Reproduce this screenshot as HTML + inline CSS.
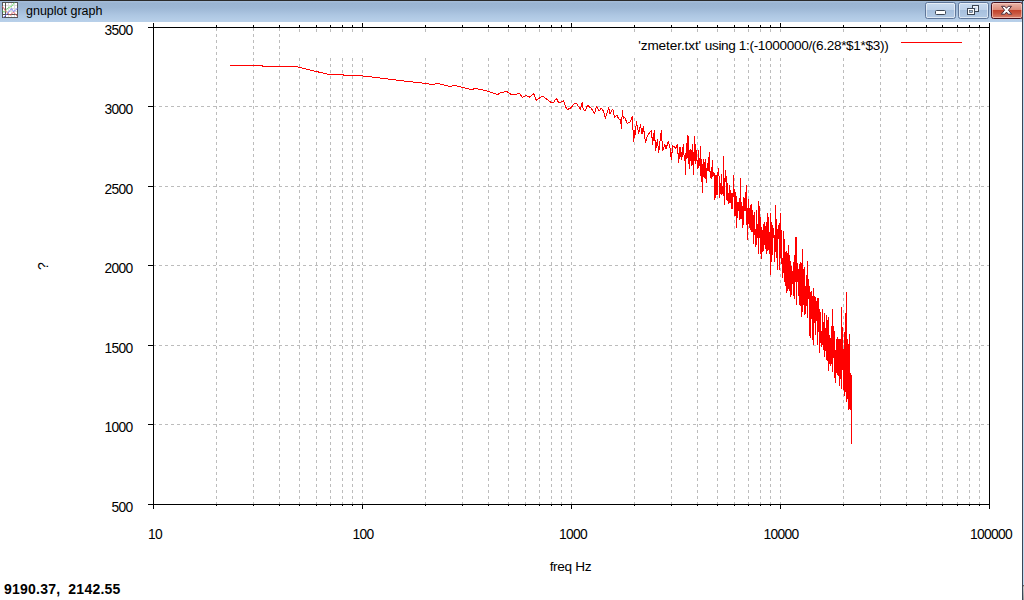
<!DOCTYPE html>
<html><head><meta charset="utf-8"><title>gnuplot graph</title>
<style>
html,body{margin:0;padding:0;background:#fff;}
body{width:1024px;height:600px;overflow:hidden;position:relative;font-family:"Liberation Sans",sans-serif;color:#000;}
#tb{position:absolute;left:0;top:0;width:1024px;height:22px;background:linear-gradient(#a3bbd8 0px,#a3bbd8 2px,#99b3d1 3px,#9db7d5 8px,#adc6e2 15px,#b9d1ea 22px);}
#tbtop{position:absolute;left:0;top:0;width:1024px;height:1px;background:#2a2a2a;}
#title{position:absolute;left:26px;top:4px;font-size:12.5px;line-height:15px;white-space:nowrap;letter-spacing:0px;}
#rb1{position:absolute;left:1022px;top:1px;width:1px;height:599px;background:#3a4656;}
#rb2{position:absolute;left:1023px;top:1px;width:1px;height:584px;background:#c3d8ef;}
#rb3{position:absolute;left:1023px;top:585px;width:1px;height:15px;background:linear-gradient(#444,#ccc 2px,#999);}
svg{position:absolute;left:0;top:0;}
.yl{position:absolute;left:60px;width:72.6px;text-align:right;font-size:13.8px;line-height:14px;letter-spacing:-0.67px;white-space:nowrap;}
.xl{position:absolute;top:528px;width:80px;text-align:center;font-size:13.8px;line-height:14px;letter-spacing:-0.67px;white-space:nowrap;}
#key{position:absolute;left:638.2px;top:39px;font-size:13.6px;line-height:14px;white-space:nowrap;}#key .a{letter-spacing:-0.1px}#key .b{letter-spacing:-0.38px}#key .c{letter-spacing:-0.335px}
#xlab{position:absolute;left:530.5px;width:80px;top:560px;text-align:center;font-size:13.6px;line-height:14px;letter-spacing:-0.3px;white-space:nowrap;}
#ylab{position:absolute;left:22.5px;top:258.5px;width:40px;height:14px;text-align:center;font-size:14px;line-height:14px;transform:rotate(-90deg);}
#status{position:absolute;left:4px;top:581px;font-size:14px;line-height:16px;font-weight:bold;letter-spacing:0.22px;word-spacing:4px;white-space:nowrap;}
.btn{position:absolute;top:2px;height:15px;width:29px;border:1px solid #60779a;border-radius:2.5px;box-shadow:inset 0 0 0 1px rgba(255,255,255,.55);background:linear-gradient(#c8daef 0,#bdd1e9 46%,#a6bfdd 47%,#b3cae5 100%);}
#bx{width:29.5px;border-color:#470f1c;background:linear-gradient(#eab5a9 0,#dc8b79 46%,#c2412a 47%,#c9563f 70%,#d9826e 100%);box-shadow:inset 0 0 0 1px rgba(255,215,205,.6);}
</style></head><body>
<div id="tb"></div><div id="tbtop"></div>
<svg id="ico" width="16" height="16" viewBox="0 0 16 16" style="left:2px;top:2px">
<rect x="0" y="0" width="16" height="16" fill="#fff"/>
<g stroke="#dcdcdc" stroke-width="1" shape-rendering="crispEdges"><line x1="6.5" y1="0" x2="6.5" y2="16"/><line x1="9.5" y1="0" x2="9.5" y2="16"/><line x1="12.5" y1="0" x2="12.5" y2="16"/><line x1="0" y1="3.5" x2="16" y2="3.5"/><line x1="0" y1="6.5" x2="16" y2="6.5"/><line x1="0" y1="9.5" x2="16" y2="9.5"/></g>
<g stroke="#555" stroke-width="1" fill="none" shape-rendering="crispEdges"><rect x="0.5" y="0.5" width="15" height="15"/><line x1="3.5" y1="0" x2="3.5" y2="16"/><line x1="0" y1="12.5" x2="16" y2="12.5"/></g>
<polyline points="0.4,8.6 2,10.4 4,8.4 6.4,5.6 9.6,4.4 12.4,0.4" fill="none" stroke="#5fdc5f" stroke-width="1" opacity="0.85"/>
<polyline points="0.4,4.2 2,6.6 3.2,8.8 5.6,10.8 8,13.4 11.2,10.4 13.2,11.6 15.2,14.4" fill="none" stroke="#f06060" stroke-width="1" opacity="0.85"/>
<polyline points="1.2,15.4 3.2,14 9.6,6.6 11.6,9.6 15.6,6.4" fill="none" stroke="#6a6af0" stroke-width="1" opacity="0.85"/>
</svg>
<div id="title">gnuplot graph</div>
<div class="btn" style="left:925px"></div><div class="btn" style="left:958px"></div><div class="btn" id="bx" style="left:991px"></div>
<svg width="100" height="22" viewBox="920 0 100 22" style="left:920px;top:0">
<rect x="935.5" y="10.5" width="10" height="4" rx="1" fill="#fff" stroke="#3c4654" stroke-width="1"/>
<rect x="972.5" y="5.5" width="6" height="6" fill="#eef3fa" stroke="#3c4654" stroke-width="1"/>
<rect x="974.5" y="7.5" width="2" height="2" fill="#b7cbe6" stroke="none"/>
<rect x="967.5" y="8.5" width="7" height="6" fill="#fff" stroke="#3c4654" stroke-width="1"/>
<rect x="969.5" y="10.5" width="3" height="2" fill="#9fb9da" stroke="#3c4654" stroke-width="0.6"/>
<path d="M1001.5 6.3 L1004.9 6.3 L1006.5 8.3 L1008.1 6.3 L1011.5 6.3 L1008.4 10.2 L1011.7 14.2 L1008.2 14.2 L1006.5 12.1 L1004.8 14.2 L1001.3 14.2 L1004.6 10.2 Z" fill="#fff" stroke="#4a2c38" stroke-width="1" stroke-linejoin="round"/>
</svg>
<div id="rb1"></div><div id="rb2"></div><div id="rb3"></div>
<svg width="1024" height="600" viewBox="0 0 1024 600" shape-rendering="crispEdges">
<g stroke="#bcbcbc" stroke-width="1" stroke-dasharray="3 3" fill="none"><line x1="216.5" y1="28" x2="216.5" y2="504"/><line x1="253.5" y1="28" x2="253.5" y2="504"/><line x1="279.5" y1="28" x2="279.5" y2="504"/><line x1="299.5" y1="29" x2="299.5" y2="32"/><line x1="299.5" y1="58" x2="299.5" y2="504"/><line x1="316.5" y1="29" x2="316.5" y2="32"/><line x1="316.5" y1="58" x2="316.5" y2="504"/><line x1="330.5" y1="29" x2="330.5" y2="32"/><line x1="330.5" y1="58" x2="330.5" y2="504"/><line x1="342.5" y1="29" x2="342.5" y2="32"/><line x1="342.5" y1="58" x2="342.5" y2="504"/><line x1="352.5" y1="29" x2="352.5" y2="32"/><line x1="352.5" y1="58" x2="352.5" y2="504"/><line x1="425.5" y1="29" x2="425.5" y2="32"/><line x1="425.5" y1="58" x2="425.5" y2="504"/><line x1="462.5" y1="29" x2="462.5" y2="32"/><line x1="462.5" y1="58" x2="462.5" y2="504"/><line x1="488.5" y1="29" x2="488.5" y2="32"/><line x1="488.5" y1="58" x2="488.5" y2="504"/><line x1="508.5" y1="29" x2="508.5" y2="32"/><line x1="508.5" y1="58" x2="508.5" y2="504"/><line x1="525.5" y1="29" x2="525.5" y2="32"/><line x1="525.5" y1="58" x2="525.5" y2="504"/><line x1="539.5" y1="29" x2="539.5" y2="32"/><line x1="539.5" y1="58" x2="539.5" y2="504"/><line x1="551.5" y1="29" x2="551.5" y2="32"/><line x1="551.5" y1="58" x2="551.5" y2="504"/><line x1="561.5" y1="29" x2="561.5" y2="32"/><line x1="561.5" y1="58" x2="561.5" y2="504"/><line x1="634.5" y1="29" x2="634.5" y2="32"/><line x1="634.5" y1="58" x2="634.5" y2="504"/><line x1="671.5" y1="29" x2="671.5" y2="32"/><line x1="671.5" y1="58" x2="671.5" y2="504"/><line x1="697.5" y1="29" x2="697.5" y2="32"/><line x1="697.5" y1="58" x2="697.5" y2="504"/><line x1="717.5" y1="29" x2="717.5" y2="32"/><line x1="717.5" y1="58" x2="717.5" y2="504"/><line x1="734.5" y1="29" x2="734.5" y2="32"/><line x1="734.5" y1="58" x2="734.5" y2="504"/><line x1="748.5" y1="29" x2="748.5" y2="32"/><line x1="748.5" y1="58" x2="748.5" y2="504"/><line x1="760.5" y1="29" x2="760.5" y2="32"/><line x1="760.5" y1="58" x2="760.5" y2="504"/><line x1="770.5" y1="29" x2="770.5" y2="32"/><line x1="770.5" y1="58" x2="770.5" y2="504"/><line x1="843.5" y1="29" x2="843.5" y2="32"/><line x1="843.5" y1="58" x2="843.5" y2="504"/><line x1="880.5" y1="29" x2="880.5" y2="32"/><line x1="880.5" y1="58" x2="880.5" y2="504"/><line x1="906.5" y1="29" x2="906.5" y2="32"/><line x1="906.5" y1="58" x2="906.5" y2="504"/><line x1="926.5" y1="29" x2="926.5" y2="32"/><line x1="926.5" y1="58" x2="926.5" y2="504"/><line x1="942.5" y1="29" x2="942.5" y2="32"/><line x1="942.5" y1="58" x2="942.5" y2="504"/><line x1="957.5" y1="29" x2="957.5" y2="32"/><line x1="957.5" y1="58" x2="957.5" y2="504"/><line x1="969.5" y1="29" x2="969.5" y2="32"/><line x1="969.5" y1="58" x2="969.5" y2="504"/><line x1="979.5" y1="28" x2="979.5" y2="504"/><line x1="362.5" y1="29" x2="362.5" y2="32"/><line x1="362.5" y1="58" x2="362.5" y2="504"/><line x1="571.5" y1="29" x2="571.5" y2="32"/><line x1="571.5" y1="58" x2="571.5" y2="504"/><line x1="780.5" y1="29" x2="780.5" y2="32"/><line x1="780.5" y1="58" x2="780.5" y2="504"/><line x1="153" y1="106.5" x2="989" y2="106.5"/><line x1="153" y1="186.5" x2="989" y2="186.5"/><line x1="153" y1="265.5" x2="989" y2="265.5"/><line x1="153" y1="345.5" x2="989" y2="345.5"/><line x1="153" y1="424.5" x2="989" y2="424.5"/></g>
<g stroke="#000" stroke-width="1" fill="none"><rect x="153.5" y="27.5" width="836" height="477" fill="none"/><line x1="153.5" y1="23" x2="153.5" y2="27"/><line x1="153.5" y1="505" x2="153.5" y2="509"/><line x1="362.5" y1="23" x2="362.5" y2="27"/><line x1="362.5" y1="505" x2="362.5" y2="509"/><line x1="571.5" y1="23" x2="571.5" y2="27"/><line x1="571.5" y1="505" x2="571.5" y2="509"/><line x1="780.5" y1="23" x2="780.5" y2="27"/><line x1="780.5" y1="505" x2="780.5" y2="509"/><line x1="989.5" y1="23" x2="989.5" y2="27"/><line x1="989.5" y1="505" x2="989.5" y2="509"/><line x1="216.5" y1="25" x2="216.5" y2="27"/><line x1="216.5" y1="505" x2="216.5" y2="506"/><line x1="253.5" y1="25" x2="253.5" y2="27"/><line x1="253.5" y1="505" x2="253.5" y2="506"/><line x1="279.5" y1="25" x2="279.5" y2="27"/><line x1="279.5" y1="505" x2="279.5" y2="506"/><line x1="299.5" y1="25" x2="299.5" y2="27"/><line x1="299.5" y1="505" x2="299.5" y2="506"/><line x1="316.5" y1="25" x2="316.5" y2="27"/><line x1="316.5" y1="505" x2="316.5" y2="506"/><line x1="330.5" y1="25" x2="330.5" y2="27"/><line x1="330.5" y1="505" x2="330.5" y2="506"/><line x1="342.5" y1="25" x2="342.5" y2="27"/><line x1="342.5" y1="505" x2="342.5" y2="506"/><line x1="352.5" y1="25" x2="352.5" y2="27"/><line x1="352.5" y1="505" x2="352.5" y2="506"/><line x1="425.5" y1="25" x2="425.5" y2="27"/><line x1="425.5" y1="505" x2="425.5" y2="506"/><line x1="462.5" y1="25" x2="462.5" y2="27"/><line x1="462.5" y1="505" x2="462.5" y2="506"/><line x1="488.5" y1="25" x2="488.5" y2="27"/><line x1="488.5" y1="505" x2="488.5" y2="506"/><line x1="508.5" y1="25" x2="508.5" y2="27"/><line x1="508.5" y1="505" x2="508.5" y2="506"/><line x1="525.5" y1="25" x2="525.5" y2="27"/><line x1="525.5" y1="505" x2="525.5" y2="506"/><line x1="539.5" y1="25" x2="539.5" y2="27"/><line x1="539.5" y1="505" x2="539.5" y2="506"/><line x1="551.5" y1="25" x2="551.5" y2="27"/><line x1="551.5" y1="505" x2="551.5" y2="506"/><line x1="561.5" y1="25" x2="561.5" y2="27"/><line x1="561.5" y1="505" x2="561.5" y2="506"/><line x1="634.5" y1="25" x2="634.5" y2="27"/><line x1="634.5" y1="505" x2="634.5" y2="506"/><line x1="671.5" y1="25" x2="671.5" y2="27"/><line x1="671.5" y1="505" x2="671.5" y2="506"/><line x1="697.5" y1="25" x2="697.5" y2="27"/><line x1="697.5" y1="505" x2="697.5" y2="506"/><line x1="717.5" y1="25" x2="717.5" y2="27"/><line x1="717.5" y1="505" x2="717.5" y2="506"/><line x1="734.5" y1="25" x2="734.5" y2="27"/><line x1="734.5" y1="505" x2="734.5" y2="506"/><line x1="748.5" y1="25" x2="748.5" y2="27"/><line x1="748.5" y1="505" x2="748.5" y2="506"/><line x1="760.5" y1="25" x2="760.5" y2="27"/><line x1="760.5" y1="505" x2="760.5" y2="506"/><line x1="770.5" y1="25" x2="770.5" y2="27"/><line x1="770.5" y1="505" x2="770.5" y2="506"/><line x1="843.5" y1="25" x2="843.5" y2="27"/><line x1="843.5" y1="505" x2="843.5" y2="506"/><line x1="880.5" y1="25" x2="880.5" y2="27"/><line x1="880.5" y1="505" x2="880.5" y2="506"/><line x1="906.5" y1="25" x2="906.5" y2="27"/><line x1="906.5" y1="505" x2="906.5" y2="506"/><line x1="926.5" y1="25" x2="926.5" y2="27"/><line x1="926.5" y1="505" x2="926.5" y2="506"/><line x1="942.5" y1="25" x2="942.5" y2="27"/><line x1="942.5" y1="505" x2="942.5" y2="506"/><line x1="957.5" y1="25" x2="957.5" y2="27"/><line x1="957.5" y1="505" x2="957.5" y2="506"/><line x1="969.5" y1="25" x2="969.5" y2="27"/><line x1="969.5" y1="505" x2="969.5" y2="506"/><line x1="979.5" y1="25" x2="979.5" y2="27"/><line x1="979.5" y1="505" x2="979.5" y2="506"/><line x1="148" y1="27.5" x2="153" y2="27.5"/><line x1="148" y1="106.5" x2="153" y2="106.5"/><line x1="148" y1="186.5" x2="153" y2="186.5"/><line x1="148" y1="265.5" x2="153" y2="265.5"/><line x1="148" y1="345.5" x2="153" y2="345.5"/><line x1="148" y1="424.5" x2="153" y2="424.5"/><line x1="148" y1="504.5" x2="153" y2="504.5"/></g>
<line x1="901" y1="42.5" x2="962" y2="42.5" stroke="#f00" stroke-width="1"/>
<polyline fill="none" stroke="#f00" stroke-width="1" stroke-linejoin="round" points="230.2,65.5 262.0,65.5 263.0,66.5 295.8,66.5 328.4,74.4 343.0,74.6 344.5,75.6 359.6,75.6 380.0,78.0 400.0,80.5 408.0,81.5 418.0,82.5 425.0,83.5 432.0,84.5 438.0,83.5 449.5,86.5 455.0,85.5 471.0,89.5 476.0,88.5 485.0,90.5 497.7,94.4 501.4,92.4 506.8,91.5 511.1,94.4 515.9,94.4 519.2,93.1 522.4,97.6 525.6,95.4 529.4,97.3 533.5,93.3 536.4,100.5 541.7,96.2 544.4,97.3 550.9,102.4 553.5,102.4 556.4,98.3 558.4,102.4 561.1,102.1 563.7,100.5 565.4,106.7 567.5,109.4 570.2,108.3 575.0,103.2 576.6,103.5 580.4,109.4 582.2,102.4 583.3,109.7 585.2,110.5 587.6,105.1 591.7,108.9 594.4,113.7 596.5,106.5 599.2,111.0 601.3,108.3 603.5,111.0 605.3,118.3 608.7,107.7 610.0,113.7 612.7,109.0 614.7,117.7 616.7,115.0 618.7,119.0 620.7,119.7 621.3,128.3 622.4,110.3 623.3,118.3 624.7,117.7 627.3,123.3 630.0,122.3 632.3,116.3 633.6,141.7 635.0,129.7 635.5,134.3 636.3,121.7 638.7,133.7 640.4,124.6 642.0,133.7 643.3,126.3 645.6,143.0 647.3,135.7 651.3,130.3 652.7,144.3 654.3,130.3 655.7,150.3 657.3,139.7 658.7,152.3 661.3,130.3 662.7,151.0 664.7,144.3 666.0,149.0 668.3,141.0 670.0,148.3 671.3,159.7 672.7,145.7 676.0,148.3 677.3,144.3 678.7,162.3 680.0,147.0 680.6,152.5 681.3,160.0 681.9,152.5 682.5,157.0 683.2,144.0 683.8,151.8 684.4,160.5 685.0,158.9 685.6,175.0 686.2,143.0 686.8,159.0 687.4,155.0 688.0,135.0 688.6,164.0 689.2,150.6 689.8,169.0 690.3,150.8 690.9,149.6 691.5,152.2 692.0,166.0 692.6,144.0 693.2,154.9 693.7,175.0 694.3,149.3 694.8,136.0 695.4,158.7 695.9,164.0 696.4,150.0 697.0,160.4 697.5,163.9 698.0,169.0 698.6,150.6 699.1,159.0 699.6,161.1 700.1,167.4 700.6,146.0 701.1,182.0 701.7,159.5 702.2,166.4 702.7,193.0 703.2,159.0 703.7,176.8 704.2,177.3 704.7,162.6 705.1,172.8 705.6,159.0 706.1,183.0 706.6,168.2 707.1,168.7 707.5,163.6 708.0,171.1 708.5,166.9 709.0,157.2 709.4,152.0 709.9,169.5 710.4,178.0 710.8,175.2 711.3,169.8 711.7,179.0 712.2,160.0 712.6,176.3 713.1,172.5 713.5,175.8 714.0,173.5 714.4,174.0 714.8,200.0 715.3,195.2 715.7,175.3 716.2,175.9 716.6,187.1 717.0,195.1 717.4,188.7 717.9,172.3 718.3,171.7 718.7,168.0 719.1,177.7 719.5,198.0 720.0,189.6 720.4,190.1 720.8,194.0 721.2,174.0 721.6,186.1 722.0,194.7 722.4,187.6 722.8,186.8 723.2,187.1 723.6,156.0 724.0,196.2 724.4,205.0 724.8,188.5 725.2,170.5 725.6,181.3 726.0,175.0 726.4,200.0 726.8,188.2 727.1,195.9 727.5,183.8 727.9,200.5 728.3,195.6 728.7,193.0 729.0,204.0 729.4,185.0 729.8,197.2 730.1,202.9 730.5,191.0 730.9,197.8 731.3,209.0 731.6,199.2 732.0,192.9 732.3,204.7 732.7,208.8 733.1,193.1 733.4,183.8 733.8,175.0 734.1,194.7 734.5,216.0 734.8,213.6 735.2,192.4 735.5,215.4 735.9,194.7 736.2,201.1 736.6,228.0 736.9,196.0 737.3,217.9 737.6,212.3 738.0,209.1 738.3,207.8 738.6,210.3 739.0,201.8 739.3,204.8 739.6,220.0 740.0,199.1 740.3,178.0 740.6,207.5 741.0,219.1 741.3,208.0 741.6,202.7 741.9,204.9 742.3,209.5 742.6,218.4 742.9,228.0 743.2,198.0 743.6,224.1 743.9,197.1 744.2,200.0 744.5,210.3 744.8,210.6 745.1,208.3 745.5,201.4 745.8,210.2 746.1,185.0 746.4,222.0 746.7,224.8 747.0,215.0 747.3,208.5 747.6,215.4 747.9,240.0 748.2,199.0 748.5,203.4 748.8,214.5 749.1,228.0 749.4,208.6 749.7,218.1 750.0,226.2 750.3,225.0 750.6,229.2 750.9,206.4 751.2,204.0 751.5,232.0 751.8,225.2 752.1,229.7 752.4,210.4 752.7,231.8 753.0,213.5 753.2,230.8 753.5,244.0 753.8,228.8 754.1,212.0 754.4,226.9 754.7,229.8 755.0,235.1 755.2,229.5 755.5,247.0 755.8,242.4 756.1,238.3 756.4,210.0 756.6,244.8 756.9,216.2 757.2,238.0 757.5,225.0 757.7,229.5 758.0,236.2 758.3,230.5 758.5,254.0 758.8,201.0 759.1,208.2 759.4,237.3 759.6,219.3 759.9,220.5 760.2,217.4 760.4,249.5 760.7,219.0 761.0,253.6 761.2,229.6 761.5,259.0 761.7,227.8 762.0,245.1 762.3,252.0 762.5,230.1 762.8,250.6 763.0,245.3 763.3,235.7 763.6,224.3 763.8,251.0 764.1,222.0 764.3,231.6 764.6,239.1 764.8,239.0 765.1,247.9 765.3,226.4 765.6,245.0 765.8,248.2 766.1,248.0 766.3,232.4 766.6,254.0 766.8,243.9 767.1,213.0 767.3,235.8 767.6,251.0 767.8,232.9 768.1,217.3 768.3,232.7 768.5,217.5 768.8,249.4 769.0,243.8 769.3,232.0 769.5,240.9 769.7,253.7 770.0,243.6 770.2,263.2 770.5,275.0 770.7,213.0 770.9,262.4 771.2,261.3 771.4,233.2 771.6,222.0 771.9,224.4 772.1,229.1 772.3,255.0 772.6,247.6 772.8,225.0 773.0,236.6 773.3,234.3 773.5,235.7 773.7,228.7 774.0,238.1 774.2,255.6 774.4,235.1 774.6,262.0 774.9,247.7 775.1,231.2 775.3,205.0 775.5,228.7 775.8,251.9 776.0,217.1 776.2,232.1 776.4,253.7 776.7,251.9 776.9,243.4 777.1,270.0 777.3,247.5 777.5,233.2 777.8,229.6 778.0,239.2 778.2,225.0 778.4,238.5 778.6,233.5 778.9,234.3 779.1,223.4 779.3,241.4 779.5,226.0 779.7,246.9 779.9,270.0 780.1,248.3 780.4,213.0 780.6,224.7 780.8,257.5 781.0,245.8 781.2,230.0 781.4,241.3 781.6,257.0 781.8,248.6 782.0,263.8 782.3,278.0 782.5,262.9 782.7,258.9 782.9,271.6 783.1,263.5 783.3,261.2 783.5,235.2 783.7,231.0 783.9,272.7 784.1,252.6 784.3,282.0 784.5,278.6 784.7,239.3 784.9,266.6 785.1,281.9 785.3,252.9 785.5,273.1 785.7,285.1 785.9,266.7 786.1,251.0 786.3,280.5 786.5,293.0 786.7,270.5 786.9,274.2 787.1,279.6 787.3,269.8 787.5,267.6 787.7,291.0 787.9,264.8 788.1,245.0 788.3,269.2 788.5,259.2 788.7,260.3 788.9,288.4 789.1,283.5 789.3,278.7 789.5,255.7 789.7,279.9 789.9,279.2 790.0,291.3 790.2,280.1 790.4,276.0 790.6,297.0 790.8,261.0 791.0,288.3 791.2,282.0 791.4,272.9 791.6,291.3 791.8,294.3 791.9,266.8 792.1,273.6 792.3,282.4 792.5,281.5 792.7,276.3 792.9,271.1 793.1,295.2 793.2,262.0 793.4,269.3 793.6,268.0 793.8,295.8 794.0,289.4 794.2,299.0 794.3,287.2 794.5,267.2 794.7,280.0 794.9,255.1 795.1,265.5 795.3,274.0 795.4,281.7 795.6,262.6 795.8,270.9 796.0,237.0 796.2,277.8 796.3,282.0 796.5,305.0 796.7,267.9 796.9,286.2 797.0,275.6 797.2,263.7 797.4,267.9 797.6,277.6 797.8,277.1 797.9,281.5 798.1,280.4 798.3,283.4 798.5,280.6 798.6,269.3 798.8,288.4 799.0,295.5 799.2,305.0 799.3,282.8 799.5,265.0 799.7,273.7 799.8,265.4 800.0,285.1 800.2,272.8 800.4,293.6 800.5,270.0 800.7,262.1 800.9,269.7 801.0,306.0 801.2,278.2 801.4,263.4 801.5,272.0 801.7,291.5 801.9,291.2 802.0,317.0 802.2,249.0 802.4,294.9 802.6,282.8 802.7,293.6 802.9,310.8 803.1,300.2 803.2,301.3 803.4,269.5 803.5,284.3 803.7,297.6 803.9,283.4 804.0,302.9 804.2,296.7 804.4,301.1 804.5,287.1 804.7,267.0 804.9,305.8 805.0,315.0 805.2,291.9 805.3,311.1 805.5,286.4 805.7,301.6 805.8,303.0 806.0,290.5 806.2,275.0 806.3,292.7 806.5,294.9 806.6,305.2 806.8,300.6 806.9,290.2 807.1,301.6 807.3,261.0 807.4,318.0 807.6,291.1 807.7,288.5 807.9,303.2 808.1,280.5 808.2,288.1 808.4,298.4 808.5,280.0 808.7,295.7 808.8,281.0 809.0,295.6 809.1,313.9 809.3,315.4 809.5,308.8 809.6,308.1 809.8,286.0 809.9,332.8 810.1,338.0 810.2,325.3 810.4,301.0 810.5,309.4 810.7,292.2 810.8,320.7 811.0,322.3 811.1,292.9 811.3,310.8 811.4,318.3 811.6,293.5 811.7,291.0 811.9,300.0 812.0,304.6 812.2,296.8 812.3,311.6 812.5,314.7 812.6,319.9 812.8,331.0 812.9,333.0 813.1,345.0 813.2,297.8 813.4,309.3 813.5,301.6 813.7,288.0 813.8,315.3 814.0,316.4 814.1,322.6 814.3,296.4 814.4,301.1 814.6,315.9 814.7,313.8 814.9,312.6 815.0,315.3 815.2,307.9 815.3,297.0 815.4,319.5 815.6,334.6 815.7,309.4 815.9,314.4 816.0,300.6 816.2,307.2 816.3,317.6 816.4,302.5 816.6,320.1 816.7,320.0 816.9,304.3 817.0,316.6 817.2,316.3 817.3,325.1 817.4,327.3 817.6,345.0 817.7,311.5 817.9,320.0 818.0,298.5 818.2,331.3 818.3,326.8 818.4,315.8 818.6,309.2 818.7,321.0 818.8,317.5 819.0,313.9 819.1,325.7 819.3,322.2 819.4,309.0 819.5,334.6 819.7,324.9 819.8,352.6 820.0,327.1 820.1,342.6 820.2,331.8 820.4,342.2 820.5,312.8 820.6,322.1 820.8,332.4 820.9,335.9 821.1,346.3 821.2,332.6 821.3,342.0 821.5,336.6 821.6,338.2 821.7,333.6 821.9,346.6 822.0,333.2 822.1,317.8 822.3,339.2 822.4,309.0 822.5,330.6 822.7,344.3 822.8,326.9 822.9,329.7 823.1,341.3 823.2,330.6 823.3,322.7 823.5,333.7 823.6,337.4 823.7,339.2 823.9,324.4 824.0,349.8 824.1,350.3 824.3,357.0 824.4,336.8 824.5,329.8 824.7,313.5 824.8,327.5 824.9,342.7 825.0,330.3 825.2,328.1 825.3,343.8 825.4,350.7 825.6,336.1 825.7,328.9 825.8,345.5 826.0,336.1 826.1,340.3 826.2,354.0 826.3,349.8 826.5,331.5 826.6,355.9 826.7,315.0 826.9,360.0 827.0,331.4 827.1,338.9 827.2,320.3 827.4,360.1 827.5,357.5 827.6,326.4 827.7,323.1 827.9,321.9 828.0,357.7 828.1,370.6 828.2,342.9 828.4,340.1 828.5,318.0 828.6,330.8 828.7,345.1 828.9,327.3 829.0,344.4 829.1,349.1 829.2,351.1 829.4,343.1 829.5,335.8 829.6,347.9 829.7,341.1 829.9,363.2 830.0,354.7 830.1,345.8 830.2,342.4 830.4,340.5 830.5,338.6 830.6,344.4 830.7,366.0 830.8,352.5 831.0,352.8 831.1,363.3 831.2,339.2 831.3,330.0 831.5,363.9 831.6,326.4 831.7,338.6 831.8,346.4 831.9,345.9 832.1,348.8 832.2,339.9 832.3,347.7 832.4,309.0 832.5,353.0 832.7,372.0 832.8,327.3 832.9,340.5 833.0,325.5 833.1,326.6 833.3,353.1 833.4,334.9 833.5,355.0 833.6,357.5 833.7,352.1 833.9,355.8 834.0,348.3 834.1,331.5 834.2,351.4 834.3,358.8 834.4,334.6 834.6,353.5 834.7,365.2 834.8,345.9 834.9,365.6 835.0,378.2 835.1,351.9 835.3,382.6 835.4,356.5 835.5,375.8 835.6,361.6 835.7,368.0 835.8,350.2 836.0,357.5 836.1,357.5 836.2,339.9 836.3,372.6 836.4,366.6 836.5,340.2 836.6,364.6 836.8,355.6 836.9,361.3 837.0,360.3 837.1,342.1 837.2,354.5 837.3,370.4 837.4,351.0 837.6,347.0 837.7,375.0 837.8,337.6 837.9,361.0 838.0,374.5 838.1,362.7 838.2,361.2 838.3,376.0 838.5,353.9 838.6,352.5 838.7,365.7 838.8,366.3 838.9,349.4 839.0,339.0 839.1,364.5 839.2,364.4 839.4,346.9 839.5,359.9 839.6,385.6 839.7,366.7 839.8,358.8 839.9,358.4 840.0,353.9 840.1,373.0 840.2,377.7 840.4,351.0 840.5,369.0 840.6,342.9 840.7,355.5 840.8,366.3 840.9,379.1 841.0,345.2 841.1,307.5 841.2,354.3 841.3,321.1 841.4,349.4 841.6,334.8 841.7,388.6 841.8,326.7 841.9,317.6 842.0,351.4 842.1,356.5 842.2,341.7 842.3,369.7 842.4,348.5 842.5,343.2 842.6,363.9 842.7,327.4 842.8,344.4 843.0,357.0 843.1,372.9 843.2,356.0 843.3,364.8 843.4,349.2 843.5,366.0 843.6,388.8 843.7,351.2 843.8,389.6 843.9,353.6 844.0,364.7 844.1,366.5 844.2,380.1 844.3,396.0 844.4,332.0 844.5,333.0 844.6,374.9 844.8,371.2 844.9,391.0 845.0,361.8 845.1,362.1 845.2,376.0 845.3,363.4 845.4,391.4 845.5,325.4 845.6,344.3 845.7,313.1 845.8,371.5 845.9,341.6 846.0,373.6 846.1,292.5 846.2,348.5 846.3,341.0 846.4,333.9 846.5,327.1 846.6,334.9 846.7,402.0 846.8,355.8 846.9,358.4 847.0,354.6 847.1,381.1 847.2,373.1 847.3,361.1 847.4,339.0 847.5,364.8 847.6,347.3 847.7,398.6 847.8,381.7 847.9,357.3 848.0,393.1 848.1,379.9 848.2,345.7 848.3,409.6 848.4,379.2 848.6,389.0 848.7,376.4 848.8,369.9 848.9,344.4 849.0,389.8 849.1,334.6 849.2,366.6 849.3,378.0 849.4,372.8 849.5,408.0 849.5,366.2 849.6,373.2 849.7,347.2 849.8,368.8 849.9,387.6 850.0,398.5 850.1,373.2 850.2,377.9 850.3,403.3 850.4,409.6 850.5,392.5 850.6,406.2 850.7,387.8 850.8,407.5 850.9,382.5 851.0,398.9 851.1,444.0 851.2,375.0 851.3,422.9 851.4,434.8 851.5,444.0"/>
</svg>
<div class="yl" style="top:24px">3500</div>
<div class="yl" style="top:103px">3000</div>
<div class="yl" style="top:183px">2500</div>
<div class="yl" style="top:262px">2000</div>
<div class="yl" style="top:342px">1500</div>
<div class="yl" style="top:421px">1000</div>
<div class="yl" style="top:501px">500</div>
<div class="xl" style="left:115px">10</div>
<div class="xl" style="left:323px">100</div>
<div class="xl" style="left:533px">1000</div>
<div class="xl" style="left:741px">10000</div>
<div class="xl" style="left:951px">100000</div>
<div id="key"><span class="a">'zmeter.txt' </span><span class="b">using </span><span class="c">1:(-1000000/(6.28*$1*$3))</span></div>
<div id="xlab">freq Hz</div>
<div id="ylab">?</div>
<div id="status">9190.37, 2142.55</div>
</body></html>
